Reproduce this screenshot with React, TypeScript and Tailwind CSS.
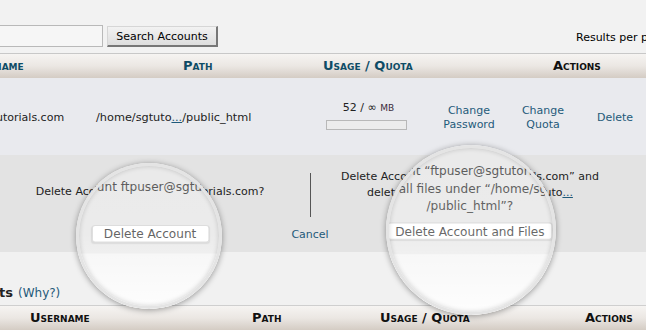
const headCell = "text-[13px] font-bold [font-variant:small-caps] text-[#0e4c66] whitespace-nowrap";
const headGrad = "bg-gradient-to-b from-[#f6f4f2] via-[#ebe7e3] to-[#d4ccc4]";

const Sheet = () => {
  return (
    <div className="w-[646px] h-[330px] overflow-hidden bg-[#f1f1f1] text-[#222] text-[11px] font-['DejaVu_Sans',sans-serif]">
      {/* search bar */}
      <div className="h-[53px] flex items-start pt-[25px] bg-[#f2f2f2]">
        <div className="shrink-0 ml-[-47px] w-[150px] h-[22px] border border-[#b9b9b9] bg-[#f6f6f6]" />
        <button className="shrink-0 ml-[4px] mt-[1px] h-[21px] w-[111px] border border-[#d6d6d6] border-r-2 border-b-2 border-r-[#777] border-b-[#777] bg-gradient-to-b from-[#f2f2f2] to-[#dedede] text-[11px] text-black leading-none">
          Search Accounts
        </button>
        <span className="shrink-0 ml-[358px] mt-[5px] whitespace-nowrap text-[11px] text-black">
          Results per page:
        </span>
      </div>
      <div className="h-px bg-[#c8c8c8]" />

      {/* header */}
      <div className={`h-[24px] ${headGrad}`}>
        <div className="ml-[-36px] h-full grid grid-cols-[219px_140px_230px_1fr] items-center">
          <span className={headCell}>Username</span>
          <span className={headCell}>Path</span>
          <span className={headCell}>Usage / Quota</span>
          <span className={`${headCell} text-[#111]`}>Actions</span>
        </div>
      </div>

      {/* account row */}
      <div className="h-[77px] bg-[#e9eaee] flex items-center pt-[3px] ml-[-71px] whitespace-nowrap">
        <div className="shrink-0 w-[167px]">ftpuser@sgtutorials.com</div>
        <div className="shrink-0 w-[230px] text-[11.3px]">
          /home/sgtuto<span className="underline text-[#1f5a7a]">...</span>/public_html
        </div>
        <div className="shrink-0 w-[81px] flex flex-col items-center pb-[5px]">
          <div className="leading-[14px] pl-[4px]">
            52 / ∞ <span className="text-[9px] text-[#3a2a3a]">MB</span>
          </div>
          <div className="mt-[5px] w-[81px] h-[10px] border border-[#b8b8b8] bg-[#ececec]" />
        </div>
        <div className="shrink-0 w-[24px]" />
        <div className="shrink-0 w-[76px] text-center leading-[14px] text-[#1f5a7a]">
          Change
          <br />
          Password
        </div>
        <div className="shrink-0 w-[72px] text-center leading-[14px] text-[#1f5a7a]">
          Change
          <br />
          Quota
        </div>
        <div className="shrink-0 w-[72px] text-center text-[#1f5a7a]">Delete</div>
      </div>

      {/* delete confirmation */}
      <div className="h-[97px] bg-[#e3e3e3] flex leading-[16px]">
        <div className="shrink-0 w-[300px] flex flex-col items-center pt-[29px]">
          <p className="whitespace-nowrap">Delete Account ftpuser@sgtutorials.com?</p>
          <button className="mt-[26px] w-[107px] h-[16px] bg-white border border-[#cfcfcf] rounded-[3px] shadow-[0_1px_1px_rgba(0,0,0,0.12)] text-[11px] leading-none text-[#222]">
            Delete Account
          </button>
        </div>
        <div className="shrink-0 w-[20px] flex flex-col items-center pt-[18px]">
          <div className="w-px h-[44px] bg-[#555]" />
          <span className="mt-[10px] text-[#1f5a7a]">Cancel</span>
        </div>
        <div className="shrink-0 w-[300px] flex flex-col items-center pt-[14px] text-center whitespace-nowrap">
          <p>
            Delete Account “ftpuser@sgtutorials.com” and
            <br />
            delete all files under “/home/sgtuto<span className="underline text-[#1f5a7a]">...</span>
            <br />
            /public_html”?
          </p>
          <button className="mt-[6px] w-[150px] h-[16px] bg-white border border-[#cfcfcf] rounded-[3px] shadow-[0_1px_1px_rgba(0,0,0,0.12)] text-[11px] leading-none text-[#222]">
            Delete Account and Files
          </button>
        </div>
      </div>

      {/* special accounts */}
      <div className="h-[53px] flex items-end pb-[3px]">
        <div className="shrink-0 w-[13px] flex justify-end">
          <span className="whitespace-nowrap text-[13px] font-bold">Special Accounts</span>
        </div>
        <span className="ml-[5px] text-[12px] text-[#1f5a7a]">(Why?)</span>
      </div>
      <div className="h-px bg-[#cfcfcf]" />
      <div className={`h-[24px] ${headGrad}`}>
        <div className="h-full pl-[30px] grid grid-cols-[222px_128px_205px_1fr] items-center">
          <span className={`${headCell} text-[#111]`}>Username</span>
          <span className={`${headCell} text-[#111]`}>Path</span>
          <span className={`${headCell} text-[#111]`}>Usage / Quota</span>
          <span className={`${headCell} text-[#111]`}>Actions</span>
        </div>
      </div>
    </div>
  );
};

const App = () => {
  return (
    <div className="relative w-[646px] h-[330px] overflow-hidden">
      <Sheet />

      {/* left lens */}
      <div className="absolute left-[76px] top-[163px] w-[146px] h-[146px] rounded-full overflow-hidden shadow-[0_1px_6px_rgba(0,0,0,0.4)]">
        <div className="absolute left-[-76px] top-[-163px] origin-[149px_236px] scale-110">
          <Sheet />
        </div>
        <div className="absolute inset-0 rounded-full bg-gradient-to-b from-white/25 via-white/30 to-white/90" />
        <div className="absolute inset-0 rounded-full border-[3px] border-[#e4e4e4] shadow-[inset_0_0_5px_rgba(0,0,0,0.18)]" />
      </div>

      {/* right lens */}
      <div className="absolute left-[386px] top-[145px] w-[170px] h-[170px] rounded-full overflow-hidden shadow-[0_1px_6px_rgba(0,0,0,0.4)]">
        <div className="absolute left-[-386px] top-[-145px] origin-[471px_230px] scale-110">
          <Sheet />
        </div>
        <div className="absolute inset-0 rounded-full bg-gradient-to-b from-white/25 via-white/30 to-white/90" />
        <div className="absolute inset-0 rounded-full border-[3px] border-[#e4e4e4] shadow-[inset_0_0_5px_rgba(0,0,0,0.18)]" />
      </div>
    </div>
  );
};

export default App;
